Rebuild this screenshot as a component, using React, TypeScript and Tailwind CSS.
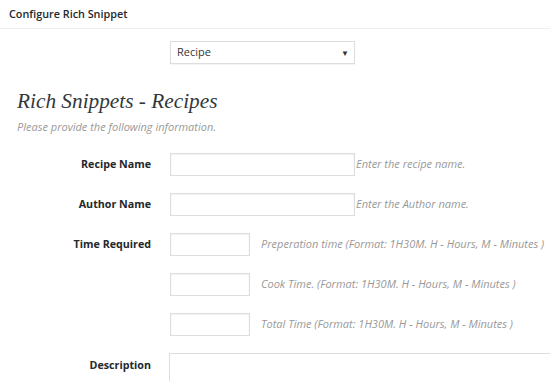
import React from "react";

const sans = { fontFamily: '"Open Sans", "Noto Sans", sans-serif' };

function Row({ label, children }: { label: string; children: React.ReactNode }) {
  return (
    <div className="flex items-center h-[40px]">
      <div className="w-[151px] shrink-0 text-right text-[10.7px] font-bold text-[#23282d]">{label}</div>
      <div className="ml-[19px] flex items-center">{children}</div>
    </div>
  );
}

const inputCls = "h-[23px] border border-[#ddd] bg-white shadow-[inset_0_1px_2px_rgba(0,0,0,0.07)]";
const hintCls = "text-[11px] italic text-[#999]";

export default function App() {
  return (
    <div className="w-[550px] h-[381px] overflow-hidden bg-white" style={sans}>
      <div className="h-[29px] border-b border-[#eee] px-[9px] flex items-center text-[10.8px] font-semibold text-[#23282d]">
        Configure Rich Snippet
      </div>
      <div className="pt-[12px] pl-[170px]">
        <div className="w-[185px] h-[23px] border border-[#ddd] flex items-center justify-between pl-[6px] pr-[5px] text-[11px] text-[#32373c] shadow-[0_1px_1px_rgba(0,0,0,0.04)]">
          <span>Recipe</span>
          <span className="text-[8px] text-[#333]">▼</span>
        </div>
      </div>
      <div className="pl-[17px] pt-[24px]">
        <h1 className="text-[21.3px] italic text-[#32373c] leading-[26px]" style={{ fontFamily: '"Liberation Serif", serif' }}>
          Rich Snippets - Recipes
        </h1>
        <p className={`${hintCls} mt-[6px] leading-[14px]`}>Please provide the following information.</p>
      </div>
      <div className="mt-[10px]">
        <Row label="Recipe Name">
          <div className={`${inputCls} w-[185px]`} />
          <span className={`${hintCls} ml-[1px]`}>Enter the recipe name.</span>
        </Row>
        <Row label="Author Name">
          <div className={`${inputCls} w-[185px]`} />
          <span className={`${hintCls} ml-[1px]`}>Enter the Author name.</span>
        </Row>
        <Row label="Time Required">
          <div className={`${inputCls} w-[80px]`} />
          <span className={`${hintCls} ml-[11px] text-[10.6px]`}>Preperation time (Format: 1H30M. H - Hours, M - Minutes )</span>
        </Row>
        <Row label="">
          <div className={`${inputCls} w-[80px]`} />
          <span className={`${hintCls} ml-[11px] text-[10.6px]`}>Cook Time. (Format: 1H30M. H - Hours, M - Minutes )</span>
        </Row>
        <Row label="">
          <div className={`${inputCls} w-[80px]`} />
          <span className={`${hintCls} ml-[11px] text-[10.6px]`}>Total Time (Format: 1H30M. H - Hours, M - Minutes )</span>
        </Row>
        <div className="flex items-start">
          <div className="w-[151px] shrink-0 text-right text-[10.7px] font-bold text-[#23282d] pt-[13px]">Description</div>
          <div className="ml-[18px] mt-[9px] w-[400px] h-[60px] border border-[#ddd] shrink-0" />
        </div>
      </div>
    </div>
  );
}
